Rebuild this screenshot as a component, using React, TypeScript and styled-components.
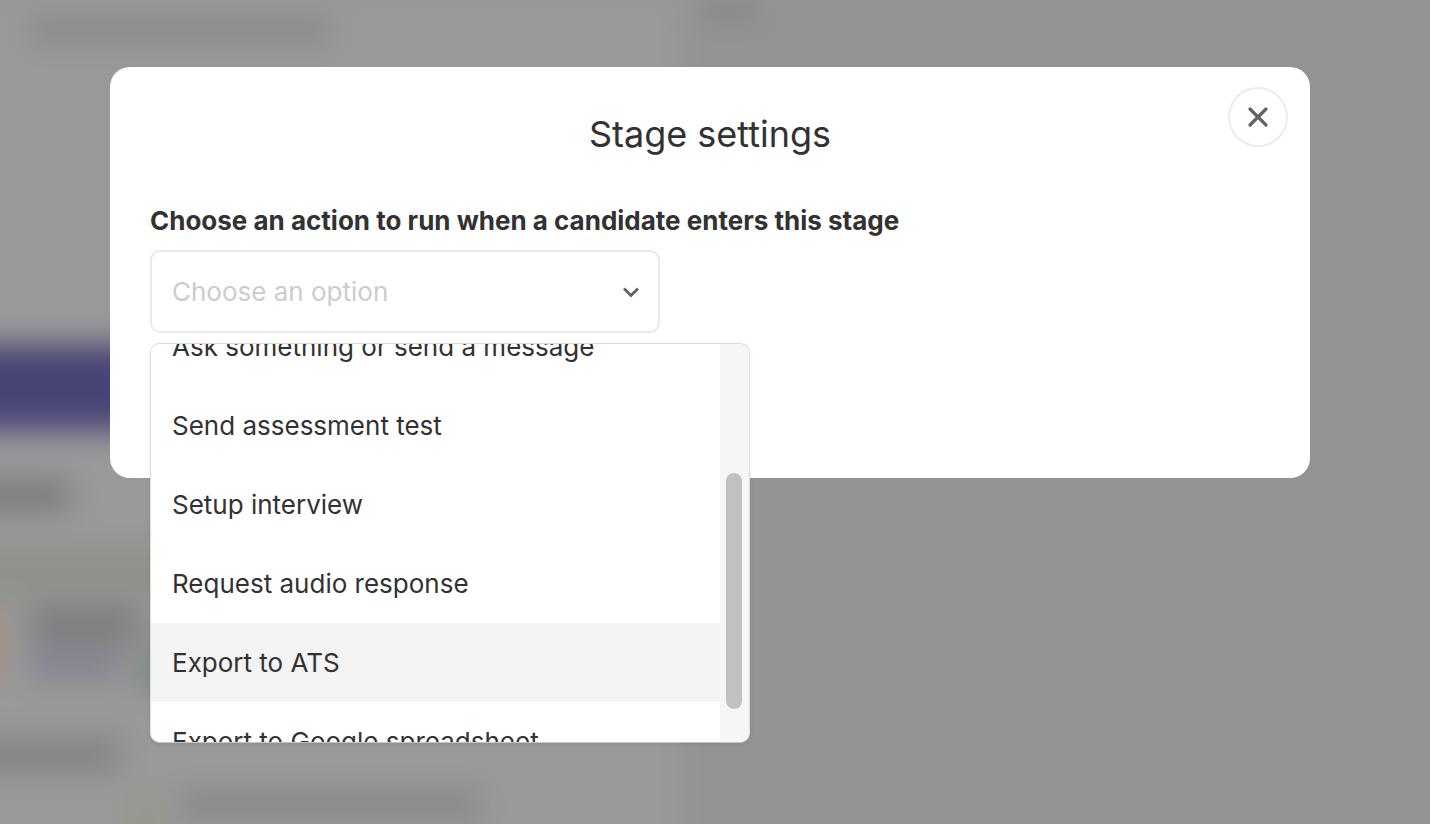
import React from 'react'
import styled, { createGlobalStyle } from 'styled-components'

const GlobalStyle = createGlobalStyle`
  html, body {
    margin: 0;
    height: 100%;
    overflow: hidden;
    background: #969696;
    font-family: Inter, "Liberation Sans", sans-serif;
    color: #323232;
  }
`

// blurred page that sits behind the dialog
const Backdrop = styled.div`
  position: fixed;
  inset: 0;
  overflow: hidden;
  background: #979797;
`

const BlurLayer = styled.div`
  width: 1510px;
  height: 880px;
  margin-left: -40px;
  display: flex;
  filter: blur(15px);
`

const SideColumn = styled.div`
  width: 720px;
  padding-top: 18px;
  display: flex;
  flex-direction: column;
  background: #999999;
`

const MainColumn = styled.div`
  flex: 1;
  background: #939393;
  padding-left: 20px;
`

const BlurRow = styled.div<{ $mt: number }>`
  display: flex;
  margin-top: ${({ $mt }) => $mt}px;
`

const BlurStack = styled.div<{ $ml: number }>`
  display: flex;
  flex-direction: column;
  gap: 8px;
  margin-left: ${({ $ml }) => $ml}px;
`

const BlurBar = styled.div<{ $w: number; $h: number; $c: string; $ml?: number; $mt?: number }>`
  width: ${({ $w }) => $w}px;
  height: ${({ $h }) => $h}px;
  margin-left: ${({ $ml }) => $ml ?? 0}px;
  margin-top: ${({ $mt }) => $mt ?? 0}px;
  background: ${({ $c }) => $c};
  flex-shrink: 0;
`

const Overlay = styled.div`
  position: fixed;
  inset: 0;
  display: flex;
  justify-content: flex-start;
  align-items: flex-start;
  padding: 67px 0 0 110px;
`

const Modal = styled.div`
  position: relative;
  width: 1200px;
  height: 411px;
  box-sizing: border-box;
  padding: 0 40px;
  background: #fff;
  border-radius: 20px;
`

const Title = styled.h2`
  margin: 0;
  padding-top: 46px;
  font-size: 36px;
  line-height: 42px;
  font-weight: 400;
  text-align: center;
`

const CloseButton = styled.button`
  position: absolute;
  top: 20px;
  right: 22px;
  width: 60px;
  height: 60px;
  padding: 0;
  display: flex;
  align-items: center;
  justify-content: center;
  background: #fff;
  border: 2px solid #ebebeb;
  border-radius: 50%;
`

const Label = styled.div`
  margin-top: 50px;
  font-size: 26px;
  line-height: 32px;
  font-weight: 700;
`

const SelectBox = styled.div`
  margin-top: 13px;
  width: 510px;
  height: 83px;
  box-sizing: border-box;
  padding: 0 18px 0 20px;
  display: flex;
  align-items: center;
  justify-content: space-between;
  border: 2px solid #e9e9e9;
  border-radius: 10px;
  background: #fff;
`

const Placeholder = styled.span`
  font-size: 26px;
  color: #cccccc;
`

const Menu = styled.div`
  position: absolute;
  left: 40px;
  top: 276px;
  width: 600px;
  height: 400px;
  box-sizing: border-box;
  display: flex;
  overflow: hidden;
  background: #fff;
  border: 1px solid #dcdcdc;
  border-bottom-color: #c4c4c4;
  border-radius: 10px;
  box-shadow: 0 1px 5px rgba(0, 0, 0, 0.08);
`

const OptionList = styled.div`
  flex: 1;
  margin-top: -37px;
`

const Option = styled.div<{ $active?: boolean }>`
  height: 79px;
  padding-left: 21px;
  display: flex;
  align-items: center;
  font-size: 26px;
  background: ${({ $active }) => ($active ? '#f4f4f4' : '#fff')};
`

const ScrollTrack = styled.div`
  width: 29px;
  padding: 129px 7px 0 6px;
  box-sizing: border-box;
  background: #f6f6f6;
`

const ScrollThumb = styled.div`
  width: 16px;
  height: 236px;
  border-radius: 8px;
  background: #c1c1c1;
`

const options = [
  'Ask something or send a message',
  'Send assessment test',
  'Setup interview',
  'Request audio response',
  'Export to ATS',
  'Export to Google spreadsheet',
]

const App = () => {
  return (
    <>
      <GlobalStyle />
      <Backdrop>
        <BlurLayer>
          <SideColumn>
            <BlurBar $w={300} $h={24} $c="#878787" $ml={70} />
            <BlurBar $w={720} $h={85} $c="#484476" $mt={303} />
            <BlurBar $w={110} $h={28} $c="#777777" $mt={51} />
            <BlurBar $w={720} $h={55} $c="#8d928a" $mt={36} />
            <BlurRow $mt={10}>
              <BlurBar $w={42} $h={70} $c="#a08e82" />
              <BlurStack $ml={28}>
                <BlurBar $w={110} $h={28} $c="#777777" />
                <BlurBar $w={90} $h={32} $c="#83818e" />
              </BlurStack>
              <BlurBar $w={24} $h={46} $c="#768578" $mt={34} />
            </BlurRow>
            <BlurBar $w={160} $h={35} $c="#818385" $mt={47} />
            <BlurRow $mt={20}>
              <BlurBar $w={40} $h={60} $c="#98968c" $ml={165} />
              <BlurBar $w={300} $h={26} $c="#858585" $ml={15} />
            </BlurRow>
          </SideColumn>
          <MainColumn>
            <BlurBar $w={60} $h={16} $c="#7f7f7f" />
          </MainColumn>
        </BlurLayer>
      </Backdrop>
      <Overlay>
        <Modal>
          <Title>Stage settings</Title>
          <CloseButton aria-label="Close">
            <svg width="22" height="22" viewBox="0 0 22 22" fill="none" stroke="#636363" strokeWidth="3.2" strokeLinecap="round">
              <path d="M3 3l16 16M19 3L3 19" />
            </svg>
          </CloseButton>
          <Label>Choose an action to run when a candidate enters this stage</Label>
          <SelectBox>
            <Placeholder>Choose an option</Placeholder>
            <svg width="18" height="12" viewBox="0 0 18 12" fill="none" stroke="#636363" strokeWidth="2.8">
              <path d="M2 2.5l7 7 7-7" />
            </svg>
          </SelectBox>
          <Menu>
            <OptionList>
              {options.map((o) => (
                <Option key={o} $active={o === 'Export to ATS'}>{o}</Option>
              ))}
            </OptionList>
            <ScrollTrack>
              <ScrollThumb />
            </ScrollTrack>
          </Menu>
        </Modal>
      </Overlay>
    </>
  )
}

export default App
